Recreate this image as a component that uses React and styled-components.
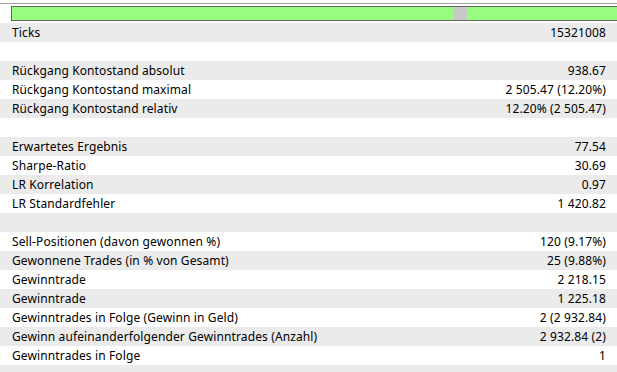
import styled, { createGlobalStyle } from 'styled-components';

const GlobalStyle = createGlobalStyle`
  html, body {
    margin: 0;
    padding: 0;
    background: #ffffff;
    overflow: hidden;
  }
`;

const Page = styled.div`
  width: 617px;
  height: 372px;
  overflow: hidden;
  background: #ffffff;
  font-family: "Segoe UI", "Noto Sans", "Open Sans", sans-serif;
  font-size: 12px;
  letter-spacing: 0.12px;
  color: #000000;
`;

const TopLine = styled.div`
  margin-top: 3px;
  height: 1px;
  background: #a0a0a0;
`;

const BarArea = styled.div`
  height: 19px;
  padding: 2px 0 0 11px;
  box-sizing: border-box;
`;

const Track = styled.div`
  width: 620px;
  height: 15px;
  box-sizing: border-box;
  border: 1px solid #646464;
  display: flex;
`;

const Segment = styled.div`
  flex: ${(p) => (p.$grow ? 1 : 'none')};
  width: ${(p) => (p.$width ? `${p.$width}px` : 'auto')};
  background: ${(p) => (p.$marker ? '#c8c8c8' : '#98fc80')};
`;

const Table = styled.div`
  display: flex;
  flex-direction: column;
`;

const Row = styled.div`
  height: 19px;
  flex: none;
  display: flex;
  align-items: center;
  justify-content: space-between;
  padding: 0 11px 0 12px;
  background: ${(p) => (p.$odd ? '#ffffff' : '#ebebeb')};
  white-space: nowrap;
`;

const Label = styled.span``;

const Value = styled.span`
  text-align: right;
`;

const rows = [
  ['Ticks', '15321008'],
  null,
  ['Rückgang Kontostand absolut', '938.67'],
  ['Rückgang Kontostand maximal', '2 505.47 (12.20%)'],
  ['Rückgang Kontostand relativ', '12.20% (2 505.47)'],
  null,
  ['Erwartetes Ergebnis', '77.54'],
  ['Sharpe-Ratio', '30.69'],
  ['LR Korrelation', '0.97'],
  ['LR Standardfehler', '1 420.82'],
  null,
  ['Sell-Positionen (davon gewonnen %)', '120 (9.17%)'],
  ['Gewonnene Trades (in % von Gesamt)', '25 (9.88%)'],
  ['Gewinntrade', '2 218.15'],
  ['Gewinntrade', '1 225.18'],
  ['Gewinntrades in Folge (Gewinn in Geld)', '2 (2 932.84)'],
  ['Gewinn aufeinanderfolgender Gewinntrades (Anzahl)', '2 932.84 (2)'],
  ['Gewinntrades in Folge', '1'],
  null,
];

export default function App() {
  return (
    <Page>
      <GlobalStyle />
      <TopLine />
      <BarArea>
        <Track>
          <Segment $width={441} />
          <Segment $width={14} $marker />
          <Segment $grow />
        </Track>
      </BarArea>
      <Table>
        {rows.map((r, i) => (
          <Row key={i} $odd={i % 2 === 1}>
            <Label>{r ? r[0] : ''}</Label>
            <Value>{r ? r[1] : ''}</Value>
          </Row>
        ))}
      </Table>
    </Page>
  );
}
